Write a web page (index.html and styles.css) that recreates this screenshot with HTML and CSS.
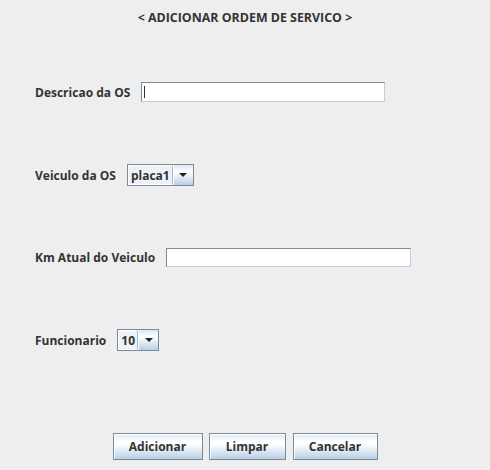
FILE: index.html
```html
<!DOCTYPE html>
<html>
<head>
<meta charset="utf-8">
<link rel="stylesheet" href="styles.css">
</head>
<body>
<div class="frame">
  <div class="title">&lt; ADICIONAR ORDEM DE SERVICO &gt;</div>
  <div class="row row1">
    <span class="label">Descricao da OS</span>
    <div class="field field-desc"><span class="caret"></span></div>
  </div>
  <div class="row row2">
    <span class="label">Veiculo da OS</span>
    <div class="combo"><span class="combo-text">placa1</span><span class="combo-btn"><span class="arrow"></span></span></div>
  </div>
  <div class="row row3">
    <span class="label">Km Atual do Veiculo</span>
    <div class="field field-km"></div>
  </div>
  <div class="row row4">
    <span class="label">Funcionario</span>
    <div class="combo"><span class="combo-text">10</span><span class="combo-btn"><span class="arrow"></span></span></div>
  </div>
  <div class="buttons">
    <button class="btn btn-add">Adicionar</button>
    <button class="btn btn-clear">Limpar</button>
    <button class="btn btn-cancel">Cancelar</button>
  </div>
</div>
</body>
</html>
```
FILE: styles.css
```css
html, body {
  margin: 0;
  padding: 0;
  background: #eeeeee;
}
.frame {
  width: 490px;
  height: 470px;
  font-family: "Open Sans", "DejaVu Sans", sans-serif;
  font-weight: 700;
  font-size: 12px;
  color: #333333;
}
.title {
  margin-top: 11px;
  height: 14px;
  line-height: 14px;
  text-align: center;
  font-size: 12.4px;
}
.row {
  display: flex;
  align-items: center;
  height: 22px;
  padding-left: 35px;
}
.row1 { margin-top: 56px; }
.row2 { margin-top: 61px; }
.row3 { margin-top: 60px; }
.row4 { margin-top: 61px; }
.label {
  margin-right: 11px;
}
.field {
  box-sizing: border-box;
  height: 20px;
  background: #ffffff;
  border: 1px solid #7a8a99;
  border-right-color: #b8cfe5;
  border-bottom-color: #b8cfe5;
  position: relative;
}
.field-desc { width: 244px; }
.field-km { width: 245px; height: 19px; }
.caret {
  position: absolute;
  left: 2px;
  top: 3px;
  width: 1px;
  height: 12px;
  background: #333333;
}
.combo {
  box-sizing: border-box;
  display: flex;
  height: 22px;
  border: 1px solid #7a8a99;
  background: #eeeeee;
}
.combo-text {
  display: flex;
  align-items: center;
  padding: 0 2px 0 2px;
  border: 1px solid #ffffff;
  border-right: 1px solid #a3b8cc;
  background: #eef2f7;
  color: #333333;
  font-size: 12px;
}
.combo-btn {
  width: 19px;
  display: flex;
  align-items: center;
  justify-content: center;
  background: linear-gradient(#dde8f3 0%, #ffffff 35%, #b8cfe5 100%);
  border-left: 1px solid #ffffff;
}
.arrow {
  width: 0;
  height: 0;
  border-left: 4px solid transparent;
  border-right: 4px solid transparent;
  border-top: 4px solid #222222;
}
.buttons {
  margin-top: 82px;
  display: flex;
  justify-content: center;
  gap: 6px;
}
.btn {
  box-sizing: border-box;
  height: 27px;
  border: 1px solid #7a8a99;
  border-radius: 0;
  background: linear-gradient(#dde8f3 0%, #ffffff 30%, #ffffff 40%, #b8cfe5 100%);
  font-family: "Open Sans", "DejaVu Sans", sans-serif;
  font-weight: 700;
  font-size: 12px;
  color: #333333;
  padding: 0;
  box-shadow: inset 1px 1px 0 #ffffff;
}
.btn-add { width: 90px; }
.btn-clear { width: 77px; margin-right: 1px; }
.btn-cancel { width: 85px; }
```
